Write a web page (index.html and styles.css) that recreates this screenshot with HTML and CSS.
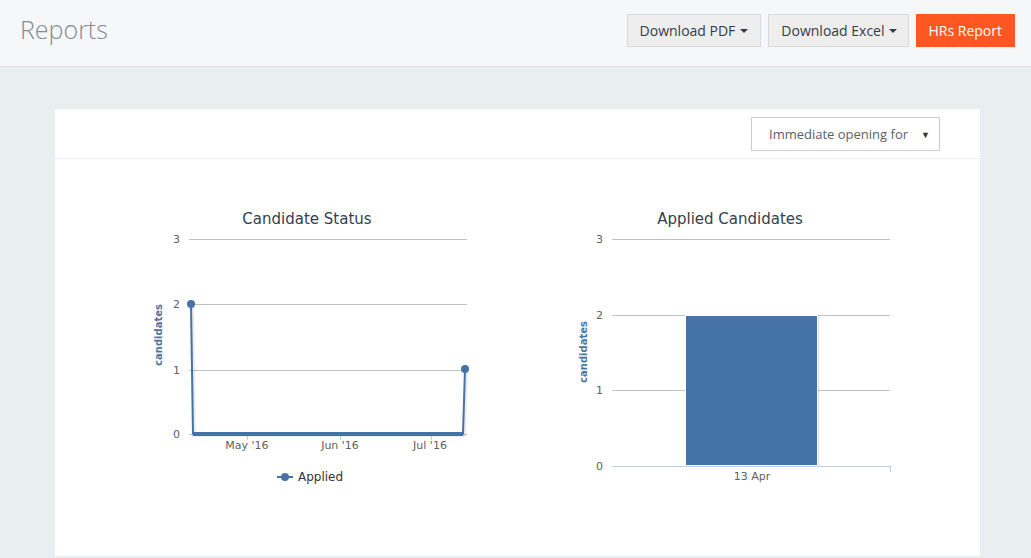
FILE: index.html
```html
<!DOCTYPE html>
<html>
<head>
<meta charset="utf-8">
<link rel="stylesheet" href="styles.css">
</head>
<body>
<header class="topbar">
  <h1 class="title">Reports</h1>
  <div class="actions">
    <button class="btn btn-default">Download PDF <span class="caret"></span></button>
    <button class="btn btn-default btn-tight">Download Excel <span class="caret"></span></button>
    <button class="btn btn-orange">HRs Report</button>
  </div>
</header>
<main class="content">
  <section class="card">
    <div class="card-head">
      <div class="select">
        <span>Immediate opening for</span>
        <span class="select-arrow">&#9660;</span>
      </div>
    </div>
    <div class="charts">
      <svg class="chart" width="340" height="300" viewBox="0 0 340 300">
        <text class="chart-title" x="167" y="24" text-anchor="middle">Candidate Status</text>
        <g class="grid">
          <line x1="49" y1="39.5" x2="327" y2="39.5"/>
          <line x1="49" y1="104.5" x2="327" y2="104.5"/>
          <line x1="49" y1="170.5" x2="327" y2="170.5"/>
          <line x1="49" y1="234.5" x2="327" y2="234.5"/>
        </g>
        <g class="ylabels">
          <text x="40" y="43" text-anchor="end">3</text>
          <text x="40" y="108" text-anchor="end">2</text>
          <text x="40" y="174" text-anchor="end">1</text>
          <text x="40" y="238" text-anchor="end">0</text>
        </g>
        <text class="axis-title" transform="translate(22,135) rotate(-90)" text-anchor="middle">candidates</text>
        <g class="ticks">
          <line x1="107.5" y1="235" x2="107.5" y2="240"/>
          <line x1="200.5" y1="235" x2="200.5" y2="240"/>
          <line x1="291.5" y1="235" x2="291.5" y2="240"/>
        </g>
        <g class="xlabels">
          <text x="107" y="249" text-anchor="middle">May '16</text>
          <text x="200" y="249" text-anchor="middle">Jun '16</text>
          <text x="290" y="249" text-anchor="middle">Jul '16</text>
        </g>
        <path class="shadow" d="M52 105 L54 235 L324 235 L326 170"/>
        <path class="series" d="M51 104 L53 234 L323 234 L325 169"/>
        <line class="series-base" x1="53" y1="234" x2="323" y2="234"/>
        <circle class="marker" cx="51" cy="104" r="4"/>
        <circle class="marker" cx="325" cy="169" r="4"/>
        <g class="legend">
          <line class="series" x1="137" y1="277" x2="153" y2="277"/>
          <circle class="marker" cx="145" cy="277" r="4"/>
          <text x="158" y="281">Applied</text>
        </g>
      </svg>
      <svg class="chart" width="340" height="300" viewBox="0 0 340 300">
        <text class="chart-title" x="170" y="24" text-anchor="middle">Applied Candidates</text>
        <g class="grid">
          <line x1="52" y1="39.5" x2="330" y2="39.5"/>
          <line x1="52" y1="115.5" x2="330" y2="115.5"/>
          <line x1="52" y1="190.5" x2="330" y2="190.5"/>
        </g>
        <g class="ylabels">
          <text x="43" y="43" text-anchor="end">3</text>
          <text x="43" y="119" text-anchor="end">2</text>
          <text x="43" y="194" text-anchor="end">1</text>
          <text x="43" y="270" text-anchor="end">0</text>
        </g>
        <text class="axis-title" transform="translate(27,152) rotate(-90)" text-anchor="middle">candidates</text>
        <rect class="bar-shadow" x="127" y="116" width="132" height="150"/>
        <rect class="bar" x="125.5" y="115.5" width="132" height="150"/>
        <line class="xaxis" x1="52" y1="266.5" x2="330" y2="266.5"/>
        <line class="xaxis" x1="330.5" y1="266" x2="330.5" y2="272"/>
        <g class="xlabels">
          <text x="192" y="280" text-anchor="middle">13 Apr</text>
        </g>
      </svg>
    </div>
  </section>
</main>
</body>
</html>
```

FILE: styles.css
```css
* { box-sizing: border-box; }
html, body {
  margin: 0;
  padding: 0;
  height: 100%;
  overflow: hidden;
}
body {
  background: #e9eef1;
  font-family: "Open Sans", "Liberation Sans", sans-serif;
}
.topbar {
  height: 67px;
  background: #f6f7f9;
  border-bottom: 1px solid #dfe3e6;
  display: flex;
  align-items: flex-start;
  justify-content: space-between;
  padding: 0 16px 0 20px;
}
.title {
  margin: 12px 0 0;
  font-size: 25px;
  font-weight: 300;
  color: #858b92;
  line-height: 34px;
}
.actions {
  display: flex;
  gap: 7px;
  margin-top: 14px;
}
.btn {
  height: 33px;
  font-family: "Open Sans", "Liberation Sans", sans-serif;
  font-size: 14px;
  line-height: 20px;
  padding: 0 12px;
  border-radius: 0;
  cursor: pointer;
  display: flex;
  align-items: center;
  gap: 5px;
}
.btn-default {
  background: #eeeeee;
  border: 1px solid #d9d9d9;
  color: #333c48;
}
.btn-tight {
  padding: 0 11px 0 12px;
  gap: 4px;
}
.btn-orange {
  background: #ff5722;
  border: 1px solid #ff5722;
  color: #fff;
  padding: 0 12px;
}
.caret {
  width: 0;
  height: 0;
  border-left: 4px solid transparent;
  border-right: 4px solid transparent;
  border-top: 4px solid #333c48;
  margin-top: 1px;
}
.content {
  padding: 42px 51px 0 55px;
}
.card {
  background: #fff;
  height: 448px;
  border-bottom: 1px solid #eceeef;
}
.card-head {
  height: 50px;
  border-bottom: 1px solid #eeeeee;
  display: flex;
  justify-content: flex-end;
  align-items: flex-start;
  padding: 8px 40px 0 0;
}
.select {
  width: 189px;
  height: 34px;
  border: 1px solid #cccccc;
  display: flex;
  align-items: center;
  justify-content: space-between;
  padding: 0 9px 0 17px;
  font-size: 13px;
  color: #5a5f66;
}
.select-arrow {
  font-size: 9px;
  color: #333;
}
.charts {
  display: flex;
  gap: 80px;
  padding: 41px 0 0 85px;
}
.chart {
  display: block;
  font-family: "DejaVu Sans", "Liberation Sans", sans-serif;
}
.chart-title {
  font-size: 15px;
  fill: #34404e;
}
.grid line {
  stroke: #c0c0c0;
  stroke-width: 1;
}
.ylabels text,
.xlabels text {
  font-size: 11px;
  fill: #606060;
}
.axis-title {
  font-size: 10px;
  font-weight: bold;
  fill: #4d759e;
}
.ticks line,
.xaxis {
  stroke: #c0d0e0;
  stroke-width: 1;
}
.series {
  fill: none;
  stroke: #4572a7;
  stroke-width: 2;
  stroke-linejoin: round;
}
.series-base {
  stroke: #4572a7;
  stroke-width: 4;
}
.shadow {
  fill: none;
  stroke: rgba(0,0,0,0.08);
  stroke-width: 4;
}
.marker {
  fill: #4572a7;
}
.legend text {
  font-size: 12px;
  fill: #333333;
}
.bar {
  fill: #4572a7;
  stroke: #ffffff;
  stroke-width: 1;
}
.bar-shadow {
  fill: rgba(0,0,0,0.12);
}
```
